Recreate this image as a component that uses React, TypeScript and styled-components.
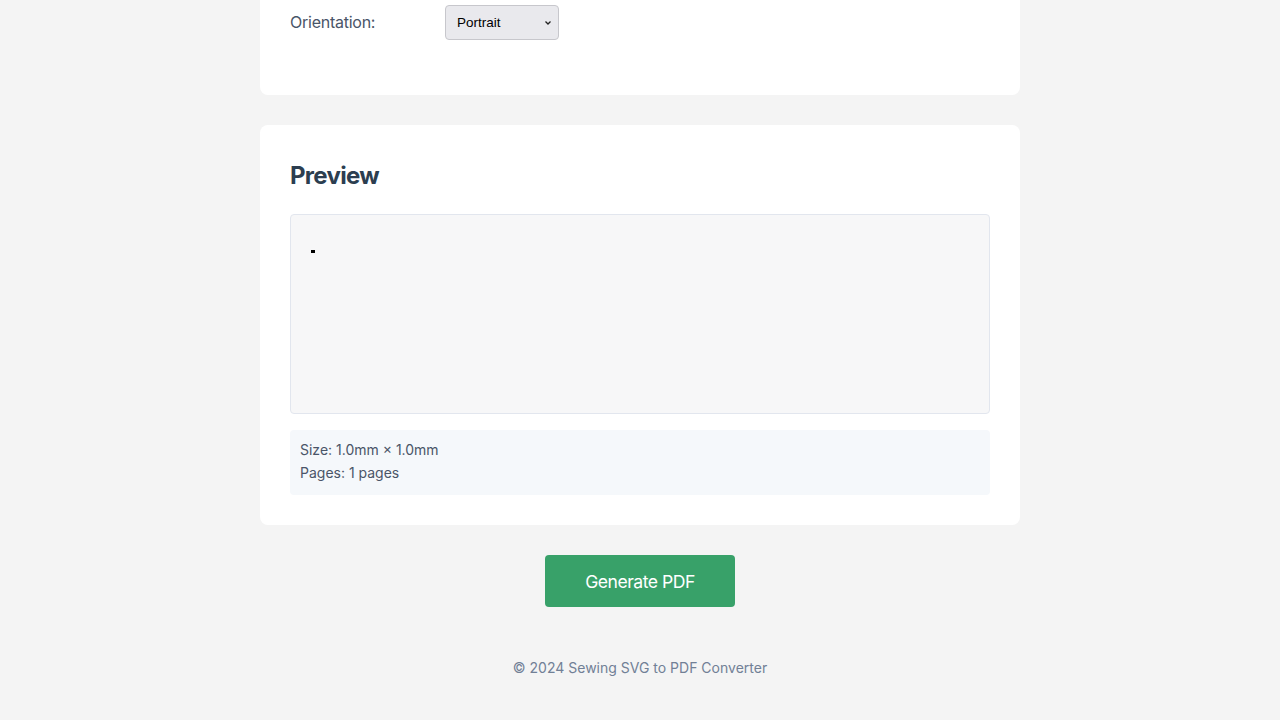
import React from "react";
import styled, { createGlobalStyle } from "styled-components";

const Global = createGlobalStyle`
  html, body { margin: 0; padding: 0; background: #f4f4f4; }
  body { font-family: Inter, "Noto Sans", Arial, sans-serif; color: #2d3748; }
`;

const Page = styled.div`
  width: 760px;
  margin: 0 auto;
  display: flex;
  flex-direction: column;
`;

const Card = styled.section<{ $cut?: boolean }>`
  background: #ffffff;
  border-radius: ${(p) => (p.$cut ? "0 0 8px 8px" : "8px")};
  padding: ${(p) => (p.$cut ? "5px 30px 55px" : "30px")};
  margin-bottom: 30px;
`;

const Row = styled.div`
  display: flex;
  align-items: center;
`;

const Label = styled.label`
  width: 155px;
  font-size: 16px;
  line-height: 20px;
  margin-bottom: 1px;
  letter-spacing: -0.25px;
  color: #4a5568;
`;

const SelectWrap = styled.div`
  position: relative;
  width: 114px;
  height: 35px;
`;

const Select = styled.select`
  appearance: none;
  width: 100%;
  height: 100%;
  box-sizing: border-box;
  background: #e9e9ed;
  border: 1px solid #c7c7cc;
  border-radius: 4px;
  padding: 0 0 0 11px;
  font-family: "Liberation Sans", Arial, sans-serif;
  font-size: 13.5px;
  color: #000;
`;

const Chevron = styled.svg`
  position: absolute;
  right: 7px;
  top: 15px;
  pointer-events: none;
`;

const Title = styled.h2`
  margin: 0 0 20px;
  padding-top: 3px;
  font-size: 24px;
  line-height: 36px;
  font-weight: 700;
  letter-spacing: -0.7px;
  color: #2c3e50;
`;

const PreviewBox = styled.div`
  border: 1px solid #e2e6ee;
  border-radius: 4px;
  background: #f7f7f8;
  padding: 35px 20px;
  height: 128px;
`;

const Mark = styled.svg`
  display: block;
`;

const Info = styled.div`
  margin-top: 16px;
  background: #f5f8fb;
  border-radius: 4px;
  padding: 8px 10px 11px;
  font-size: 14px;
  line-height: 23px;
  color: #4a5568;
`;

const Actions = styled.div`
  display: flex;
  justify-content: center;
`;

const Button = styled.button`
  width: 190px;
  height: 52px;
  border: none;
  border-radius: 4px;
  background: #38a169;
  color: #fff;
  font-family: Inter, sans-serif;
  font-size: 17.6px;
  letter-spacing: -0.5px;
  cursor: pointer;
`;

const Footer = styled.footer`
  text-align: center;
  margin-top: 51px;
  padding-bottom: 44px;
  font-size: 14px;
  line-height: 20px;
  color: #718096;
`;

export default function App() {
  return (
    <>
      <Global />
      <Page>
        <Card $cut>
          <Row>
            <Label>Orientation:</Label>
            <SelectWrap>
              <Select defaultValue="portrait">
                <option value="portrait">Portrait</option>
                <option value="landscape">Landscape</option>
              </Select>
              <Chevron width="8" height="6" viewBox="0 0 8 6">
                <path d="M1.5 1.5 L4 4 L6.5 1.5" fill="none" stroke="#222" strokeWidth="1.3" />
              </Chevron>
            </SelectWrap>
          </Row>
        </Card>
        <Card>
          <Title>Preview</Title>
          <PreviewBox>
            <Mark width="4" height="3" viewBox="0 0 4 3">
              <rect width="4" height="3" fill="#000" />
            </Mark>
          </PreviewBox>
          <Info>
            <div>Size: 1.0mm × 1.0mm</div>
            <div>Pages: 1 pages</div>
          </Info>
        </Card>
        <Actions>
          <Button>Generate PDF</Button>
        </Actions>
        <Footer>© 2024 Sewing SVG to PDF Converter</Footer>
      </Page>
    </>
  );
}
